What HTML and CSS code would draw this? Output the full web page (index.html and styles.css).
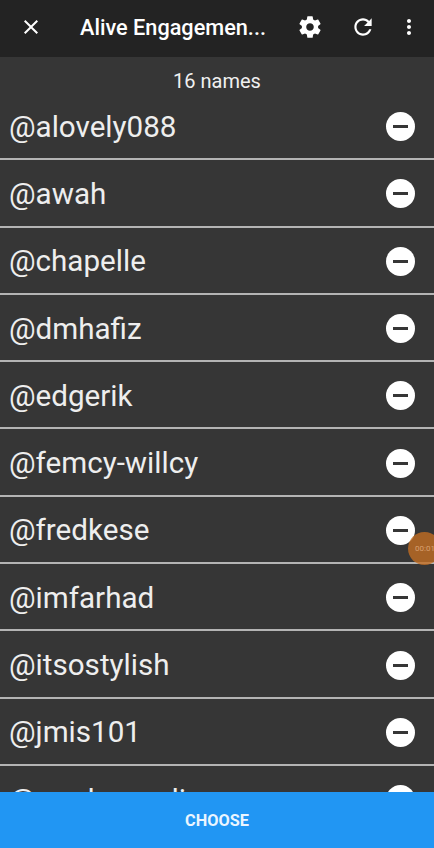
FILE: index.html
```html
<!DOCTYPE html>
<html lang="en">
<head>
  <meta charset="UTF-8">
  <meta name="viewport" content="width=device-width, initial-scale=1.0">
  <title>Alive Engagement</title>
  <link rel="stylesheet" href="styles.css">
</head>
<body>

  <div class="app">
    <header class="toolbar">
      <button class="tool close" aria-label="Close">
        <svg viewBox="0 0 24 24" width="24" height="24"><path d="M19 6.41 17.59 5 12 10.59 6.41 5 5 6.41 10.59 12 5 17.59 6.41 19 12 13.41 17.59 19 19 17.59 13.41 12z"/></svg>
      </button>
      <h1 class="title">Alive Engagemen...</h1>
      <button class="tool gear" aria-label="Settings">
        <svg viewBox="0 0 24 24" width="26" height="26"><path d="M19.43 12.98c.04-.32.07-.64.07-.98s-.03-.66-.07-.98l2.11-1.65c.19-.15.24-.42.12-.64l-2-3.46c-.12-.22-.39-.3-.61-.22l-2.49 1c-.52-.4-1.08-.73-1.69-.98l-.38-2.65C14.46 2.18 14.25 2 14 2h-4c-.25 0-.46.18-.49.42l-.38 2.65c-.61.25-1.17.59-1.69.98l-2.49-1c-.23-.09-.49 0-.61.22l-2 3.46c-.13.22-.07.49.12.64l2.11 1.65c-.04.32-.07.65-.07.98s.03.66.07.98l-2.11 1.65c-.19.15-.24.42-.12.64l2 3.46c.12.22.39.3.61.22l2.49-1c.52.4 1.08.73 1.69.98l.38 2.65c.03.24.24.42.49.42h4c.25 0 .46-.18.49-.42l.38-2.65c.61-.25 1.17-.59 1.69-.98l2.49 1c.23.09.49 0 .61-.22l2-3.46c.12-.22.07-.49-.12-.64l-2.11-1.65zM12 15.5c-1.93 0-3.5-1.57-3.5-3.5s1.57-3.5 3.5-3.5 3.5 1.57 3.5 3.5-1.57 3.5-3.5 3.5z"/></svg>
      </button>
      <button class="tool refresh" aria-label="Refresh">
        <svg viewBox="0 0 24 24" width="26" height="26"><path d="M17.65 6.35C16.2 4.9 14.21 4 12 4c-4.42 0-7.99 3.58-7.99 8s3.57 8 7.99 8c3.73 0 6.84-2.55 7.73-6h-2.08c-.82 2.33-3.04 4-5.65 4-3.31 0-6-2.69-6-6s2.69-6 6-6c1.66 0 3.14.69 4.22 1.78L13 11h7V4l-2.35 2.35z"/></svg>
      </button>
      <button class="tool more" aria-label="More">
        <svg viewBox="0 0 24 24" width="24" height="24"><path d="M12 8c1.1 0 2-.9 2-2s-.9-2-2-2-2 .9-2 2 .9 2 2 2zm0 2c-1.1 0-2 .9-2 2s.9 2 2 2 2-.9 2-2-.9-2-2-2zm0 6c-1.1 0-2 .9-2 2s.9 2 2 2 2-.9 2-2-.9-2-2-2z"/></svg>
      </button>
    </header>

    <main class="content">
      <p class="count">16 names</p>
      <ul class="names">
        <li class="name"><span>@alovely088</span><i class="remove"></i></li>
        <li class="name"><span>@awah</span><i class="remove"></i></li>
        <li class="name"><span>@chapelle</span><i class="remove"></i></li>
        <li class="name"><span>@dmhafiz</span><i class="remove"></i></li>
        <li class="name"><span>@edgerik</span><i class="remove"></i></li>
        <li class="name"><span>@femcy-willcy</span><i class="remove"></i></li>
        <li class="name"><span>@fredkese</span><i class="remove"></i></li>
        <li class="name"><span>@imfarhad</span><i class="remove"></i></li>
        <li class="name"><span>@itsostylish</span><i class="remove"></i></li>
        <li class="name"><span>@jmis101</span><i class="remove"></i></li>
        <li class="name"><span>@marharandi</span><i class="remove"></i></li>
      </ul>
    </main>

    <button class="choose">CHOOSE</button>
  </div>

  <!-- screen recorder bubble -->
  <div class="recorder"><span>00:01</span></div>

</body>
</html>
```

FILE: styles.css
```css
* { box-sizing: border-box; }
html, body { height: 100%; }
body { margin: 0; font-family: Roboto, sans-serif; background: #363636; color: #fff; overflow: hidden; }
button { font-family: inherit; border: 0; padding: 0; background: none; color: inherit; }

.app { height: 848px; display: flex; flex-direction: column; }

.toolbar { height: 57px; flex: none; display: flex; align-items: center; background: #232323; padding-bottom: 3px; }
.tool { display: flex; align-items: center; justify-content: center; flex: none; }
.tool svg { fill: #fff; display: block; }
.close { width: 62px; }
.title { flex: 1; min-width: 0; margin: 0 0 0 18px; font-size: 21.7px; font-weight: 500; white-space: nowrap; }
.gear { width: 54px; }
.refresh { width: 52px; }
.more { width: 40px; margin-right: 5px; }

.content { flex: 1; min-height: 0; overflow: hidden; }
.count { margin: 0; height: 36px; padding-top: 13px; font-size: 20px; line-height: 23px; text-align: center; color: #f0f0f0; }
.names { list-style: none; margin: 0; padding: 0; }
.name { height: 67.3px; display: flex; align-items: center; justify-content: space-between; padding: 2px 19px 0 9px; border-bottom: 2px solid #b4b4b4; font-size: 29.6px; color: #eeeeee; }
.remove { position: relative; width: 29px; height: 29px; border-radius: 50%; background: #fff; }
.remove::after { content: ""; position: absolute; left: 7px; right: 7px; top: 13px; height: 3px; background: #363636; }

.choose { height: 56px; flex: none; background: #2196f3; font-size: 16.3px; font-weight: 700; color: #eaf5ff; }

.recorder { position: absolute; left: 408px; top: 532px; width: 33px; height: 33px; border-radius: 50%; background: rgba(195, 110, 35, 0.8); display: flex; align-items: center; padding-left: 7px; overflow: hidden; }
.recorder span { font-size: 8px; color: #d9a070; white-space: nowrap; }
```
